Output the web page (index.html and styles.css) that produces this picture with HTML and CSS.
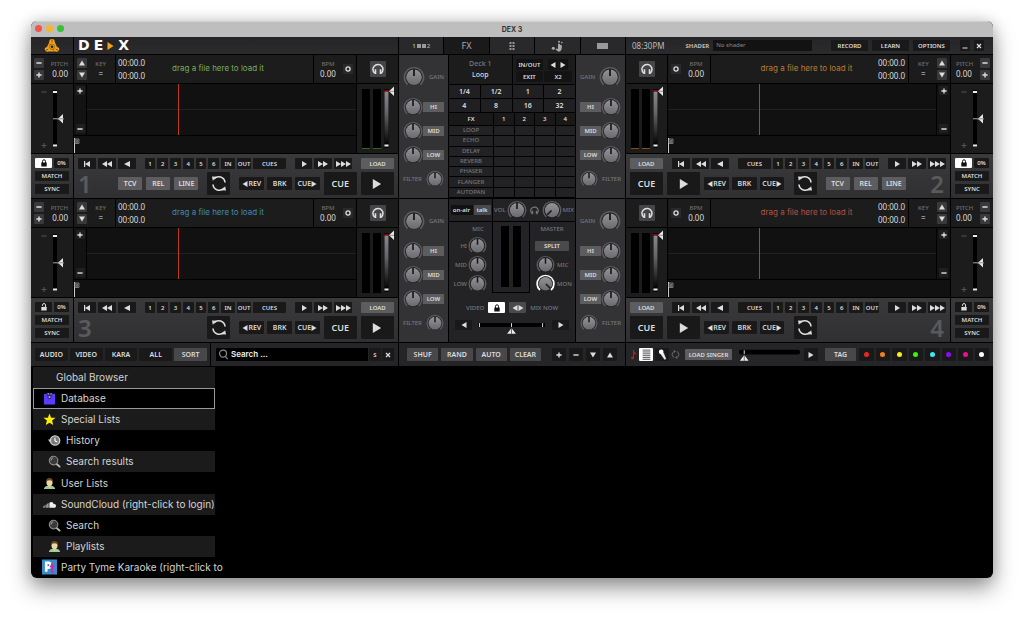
FILE: index.html
```html
<!DOCTYPE html>
<html lang="en">
<head>
<meta charset="utf-8">
<meta name="viewport" content="width=device-width, initial-scale=1">
<title>DEX 3</title>
<link rel="stylesheet" href="styles.css">
</head>
<body>
<svg class="defs" aria-hidden="true">
  <defs>
    <linearGradient id="gKnob" x1="0" y1="0" x2="0" y2="1"><stop offset="0" stop-color="#949498"/><stop offset="1" stop-color="#6a6a6e"/></linearGradient>
    <linearGradient id="gFade" x1="0" y1="0" x2="0" y2="1"><stop offset="0" stop-color="#88888c"/><stop offset=".4" stop-color="#66666a"/><stop offset="1" stop-color="#0a0a0a"/></linearGradient>
  </defs>
  <symbol id="knob" viewBox="0 0 22 22"><path d="M4.6 18.6A9.6 9.6 0 1 1 17.4 18.6" fill="none" stroke="#5c5c60" stroke-width="1.6"/><circle cx="11" cy="11" r="8.4" fill="#1c1c1e"/><circle cx="11" cy="11.2" r="7.8" fill="url(#gKnob)"/><path d="M11 3v7" stroke="#18181a" stroke-width="1.8"/></symbol>
  <symbol id="knob-min" viewBox="0 0 22 22"><path d="M4.6 18.6A9.6 9.6 0 1 1 17.4 18.6" fill="none" stroke="#5c5c60" stroke-width="1.6"/><circle cx="11" cy="11" r="8.4" fill="#1c1c1e"/><circle cx="11" cy="11.2" r="7.8" fill="url(#gKnob)"/><path d="M5.5 16.5l5-5" stroke="#18181a" stroke-width="1.8"/></symbol>
  <symbol id="knob-max" viewBox="0 0 22 22"><path d="M4.6 18.6A9.6 9.6 0 1 1 17.4 18.6" fill="none" stroke="#fff" stroke-width="2.2"/><circle cx="11" cy="11" r="8.4" fill="#1c1c1e"/><circle cx="11" cy="11.2" r="7.8" fill="url(#gKnob)"/><path d="M16.5 16.5l-5-5" stroke="#18181a" stroke-width="1.8"/></symbol>
  <symbol id="back" viewBox="0 0 18 6"><path d="M12 0v6L6 3z" fill="currentColor"/></symbol>
  <symbol id="prev" viewBox="0 0 18 6"><path d="M12 0v6L7 3zM6 0h1.2v6H6z" fill="currentColor"/></symbol>
  <symbol id="rew" viewBox="0 0 18 6"><path d="M9 0v6L4 3zM14 0v6L9 3z" fill="currentColor"/></symbol>
  <symbol id="play" viewBox="0 0 18 6"><path d="M7 0v6l5-3z" fill="currentColor"/></symbol>
  <symbol id="ff" viewBox="0 0 18 6"><path d="M4 0v6l5-3zM9 0v6l5-3z" fill="currentColor"/></symbol>
  <symbol id="fff" viewBox="0 0 18 6"><path d="M2 0v6l5-3zM7 0v6l5-3zM12 0v6l5-3z" fill="currentColor"/></symbol>
  <symbol id="left" viewBox="0 0 6 6"><path d="M5.5 0v6L.5 3z" fill="currentColor"/></symbol>
  <symbol id="right" viewBox="0 0 6 6"><path d="M.5 0v6l5-3z" fill="currentColor"/></symbol>
  <symbol id="up" viewBox="0 0 6 6"><path d="M0 5.5h6L3 .5z" fill="currentColor"/></symbol>
  <symbol id="down" viewBox="0 0 6 6"><path d="M0 .5h6L3 5.5z" fill="currentColor"/></symbol>
  <symbol id="plus" viewBox="0 0 6 6"><path d="M3 .4v5.2M.4 3h5.2" stroke="currentColor" stroke-width="1.4"/></symbol>
  <symbol id="minus" viewBox="0 0 6 6"><path d="M.4 3h5.2" stroke="currentColor" stroke-width="1.4"/></symbol>
  <symbol id="phones" viewBox="0 0 12 12"><path d="M3 10.5C.6 8 .6 5 2.200 3.200S7.800.6 9.800 3.200s1.600 4.800-.8 7.300" fill="none" stroke="currentColor" stroke-width="1.500"/><path d="M2.600 6.300h1.700v4.600H2.900zM9.400 6.300H7.700v4.600h1.400z" fill="currentColor"/></symbol>
  <symbol id="lock" viewBox="0 0 8 8"><path d="M1.300 3.600h5.400v3.900H1.300z" fill="currentColor"/><path d="M2.500 4V2.300a1.500 1.500 0 0 1 3 0V4" fill="none" stroke="currentColor"/></symbol>
  <symbol id="unlock" viewBox="0 0 8 8"><path d="M1.300 3.900h5.400v3.600H1.300z" fill="currentColor"/><path d="M2.500 2.800v-.8a1.500 1.500 0 0 1 3 0V4" fill="none" stroke="currentColor"/></symbol>
  <symbol id="sync" viewBox="0 0 16 16"><path d="M3 3.400a6.300 6.300 0 0 1 11 3.600M13 12.600a6.300 6.300 0 0 1-11-3.600" fill="none" stroke="currentColor" stroke-width="1.600"/><path d="M1 1l4.600.3-3.800 4zM15 15l-4.600-.3 3.800-4z" fill="currentColor"/></symbol>
  <symbol id="cycle" viewBox="0 0 10 10"><path d="M3.500 1.600a3.700 3.700 0 0 0 0 6.800M6.500 8.400a3.700 3.700 0 0 0 0-6.800" fill="none" stroke="currentColor" stroke-width="1.100"/><path d="M3 0l2.500 1.400L3.500 3.200zM7 10L4.500 8.600l2-1.800z" fill="currentColor"/></symbol>
  <symbol id="ring" viewBox="0 0 6 6"><circle cx="3" cy="3" r="2.100" fill="none" stroke="currentColor" stroke-width="1.300"/></symbol>
  <symbol id="pitchfader" viewBox="0 0 42 69"><path d="M22 6h4v57h-4z" fill="#000"/><path d="M22 7h4v2h-4zM22 60.500h4v2h-4z" fill="#eee"/><path d="M22 34.300h4v1h-4z" fill="#aaa"/><path d="M32 30v9.500l-5-4.700zM26.500 34.200h6v1.200h-6z" fill="#e8e8e8"/><path d="M27.500 34.800h4.500" stroke="#555" stroke-width=".6"/><path d="M10.500 8h5M10.500 61.500h5M13 59v5" stroke="#555"/></symbol>
  <symbol id="levels" viewBox="0 0 41 69"><path d="M5 5h8v60H5zM16 5h8v60h-8zM27.500 5h4v59h-4z" fill="#000"/><path d="M5 64h8v1H5zM16 64h8v1h-8z" fill="currentColor"/><path d="M27.500 8h4v51h-4z" fill="url(#gFade)"/><path d="M27.500 6.500h4v1.200h-4z" fill="#e22"/><path d="M27.500 60.500h4v2h-4z" fill="#eee"/><path d="M37 2.500v9.500l-5-4.700z" fill="#e8e8e8"/><path d="M33 7.300h4" stroke="#555" stroke-width=".6"/></symbol>
  <symbol id="flag" viewBox="0 0 6 15"><path d="M.5 0v15" stroke="#ccc"/><path d="M1 1h4v4.500H1z" fill="#333" stroke="#888" stroke-width=".8"/><path d="M3 2v3" stroke="#bbb" stroke-width=".8"/></symbol>
  <symbol id="lens" viewBox="0 0 14 14"><path d="M9 9.500l3.500 3" stroke="#bbb" stroke-width="2" stroke-linecap="round"/><circle cx="6" cy="6" r="4.600" fill="#3a3a3a" stroke="#8c8c8c" stroke-width="1.200"/><path d="M3.200 6a3 3 0 0 1 2.500-3" fill="none" stroke="#aaa"/></symbol>
  <symbol id="user" viewBox="0 0 14 14"><path d="M1 13C1.500 10 4 9.500 7 9.500s5.500.5 6 3.500z" fill="#96d296"/><path d="M5.500 8.500h3v2L7 11.500l-1.500-1z" fill="#e6c89a"/><ellipse cx="7" cy="6" rx="3.300" ry="3.800" fill="#f0d6a4"/><path d="M3.400 6C3 2.500 4.800 1.200 7 1.200S11 2.500 10.600 6C10 4.300 9 3.600 7 3.600S4 4.300 3.400 6z" fill="#6b4a1e"/></symbol>
</svg>

<main class="window">
  <h1 class="titlebar"><span class="lights"><i class="close"></i><i class="min"></i><i class="max"></i></span>DEX 3</h1>

  <header class="header">
    <div class="brand">
      <svg class="emblem" viewBox="0 0 16 16" role="img" aria-label="PCDJ"><path d="M8 1c1.900 0 2.900 1.200 2.700 3L13 9c2 .3 2.600 1.600 2.100 3.100s-2.100 2-3.500 1.300H4.400C3 14.100 1.400 13.600.9 12.100S1 9.300 3 9l2.300-5C5.100 2.200 6.100 1 8 1z" fill="#f2a31a"/><path d="M8 1.500v2.700M1.500 12.500l2.700-1.300M14.500 12.500l-2.800-1.400M5.500 6l1 .9M9.500 12.500l-.6-1.300" stroke="#5a3e0a" stroke-width=".8" fill="none"/><circle cx="8" cy="8.700" r="1.300" fill="#222"/><circle cx="8" cy="8.700" r="2.700" fill="none" stroke="#5a3e0a" stroke-width=".5"/></svg>
    </div>
    <div class="logo"><span>D</span><span>E</span><svg viewBox="0 0 6 8"><path d="M0 0v8l6-4z" fill="#f2a31a"/></svg><span>X</span></div>
    <nav class="tabs" aria-label="Panels">
      <button class="tiny">1<i></i><i></i>2</button>
      <button class="active">FX</button>
      <button aria-label="Sampler"><svg viewBox="0 0 8 8"><path d="M1.500 0h2v2h-2zM4.500 0h2v2h-2zM1.500 3h2v2h-2zM4.500 3h2v2h-2zM1.500 6h2v2h-2zM4.500 6h2v2h-2z" fill="#999"/></svg></button>
      <button aria-label="Effects pad"><svg class="wide" viewBox="0 0 12 12"><path d="M7 4l1.200-.5L9.500 5l1.500.5-.5 4L9 11.500H7L4.500 9.300l.6-.8L7 9z" fill="#aaa"/><circle cx="8" cy="1.800" r="1" fill="#aaa"/><circle cx="10.800" cy="2.600" r=".8" fill="#aaa"/><circle cx="2.300" cy="8.300" r="1.500" fill="#aaa"/></svg></button>
      <button aria-label="Video"><span class="screen"></span></button>
    </nav>
    <div class="status">
      <time>08:30PM</time>
      <label for="shader">SHADER</label><input id="shader" value="No shader">
      <button>RECORD</button><button>LEARN</button><button>OPTIONS</button>
      <button class="sq" aria-label="Minimize"><svg viewBox="0 0 6 6"><path d="M.5 5h5" stroke="#ddd" stroke-width="1.200"/></svg></button>
      <button class="sq" aria-label="Close"><svg viewBox="0 0 6 6"><path d="M1 1l4 4M5 1L1 5" stroke="#ddd" stroke-width="1.300"/></svg></button>
    </div>
  </header>

  <div class="mixer">
    <section class="deck a" aria-label="Deck 1">
      <div class="pitch-head"><div class="steps"><button aria-label="Pitch down"><svg><use href="#minus"/></svg></button><button aria-label="Pitch up"><svg><use href="#plus"/></svg></button></div><p class="readout">PITCH<b>0.00</b></p></div>
      <div class="info green"><div class="key"><div class="steps"><button aria-label="Key up"><svg><use href="#up"/></svg></button><button aria-label="Key down"><svg><use href="#down"/></svg></button></div><p class="readout">KEY<b>=</b></p></div><p class="times">00:00.0<br>00:00.0</p><p class="drop">drag a file here to load it</p><div class="bpm"><p class="readout">BPM<b>0.00</b></p><button class="tap" aria-label="Tap"><svg><use href="#ring"/></svg></button></div></div>
      <div class="phones"><button aria-label="Cue in headphones"><svg><use href="#phones"/></svg></button></div>
      <label class="fader"><input type="range" aria-label="Pitch"><svg><use href="#pitchfader"/></svg></label>
      <div class="scope"><div class="zoomer"><button aria-label="Zoom in"><svg><use href="#plus"/></svg></button><button aria-label="Zoom out"><svg><use href="#minus"/></svg></button></div><div class="wave"></div><div class="overview"><svg><use href="#flag"/></svg></div></div>
      <label class="fader"><input type="range" aria-label="Volume"><svg><use href="#levels"/></svg></label>
      <div class="sync"><button class="on" aria-label="Lock key"><svg><use href="#lock"/></svg></button><button>0%</button><button class="full">MATCH</button><button class="full">SYNC</button></div>
      <div class="controls">
        <div class="row">
          <div class="trio"><button aria-label="Start"><svg><use href="#prev"/></svg></button><button aria-label="Rewind"><svg><use href="#rew"/></svg></button><button aria-label="Back"><svg><use href="#back"/></svg></button></div>
          <div class="hot"><button>1</button><button>2</button><button>3</button><button>4</button><button>5</button><button>6</button><button>IN</button><button>OUT</button><button>CUES</button></div>
          <div class="trio"><button aria-label="Forward"><svg><use href="#play"/></svg></button><button aria-label="Fast forward"><svg><use href="#ff"/></svg></button><button aria-label="Faster forward"><svg><use href="#fff"/></svg></button></div>
          <button class="load">LOAD</button>
        </div>
        <div class="row big">
          <span class="num">1</span>
          <div class="modes"><button>TCV</button><button>REL</button><button>LINE</button></div>
          <button class="loop" aria-label="Loop"><svg><use href="#sync"/></svg></button>
          <div class="edits"><button><svg><use href="#left"/></svg>REV</button><button>BRK</button><button>CUE<svg><use href="#right"/></svg></button></div>
          <button class="main">CUE</button><button class="main" aria-label="Play"><svg><use href="#right"/></svg></button>
        </div>
      </div>
    </section>

    <section class="eq" aria-label="Deck 1 EQ">
      <div class="gain"><label class="knob"><input type="range" aria-label="Gain"><svg><use href="#knob"/></svg></label><span>GAIN</span></div>
      <div><label class="knob"><input type="range" aria-label="High"><svg><use href="#knob"/></svg></label><button>HI</button></div>
      <div><label class="knob"><input type="range" aria-label="Mid"><svg><use href="#knob"/></svg></label><button>MID</button></div>
      <div><label class="knob"><input type="range" aria-label="Low"><svg><use href="#knob"/></svg></label><button>LOW</button></div>
      <div class="filter"><span>FILTER</span><label class="knob"><input type="range" aria-label="Filter"><svg><use href="#knob"/></svg></label></div>
    </section>

    <section class="fx" aria-label="Effects">
      <div class="fx-top">
        <p>Deck 1<b>Loop</b></p>
        <div class="looper"><button>IN/OUT</button><span><button aria-label="Loop left"><svg><use href="#left"/></svg></button><button aria-label="Loop right"><svg><use href="#right"/></svg></button></span><button>EXIT</button><button>X2</button></div>
      </div>
      <div class="beats"><button>1/4</button><button>1/2</button><button>1</button><button>2</button><button>4</button><button>8</button><button>16</button><button>32</button></div>
      <table>
        <thead><tr><th>FX</th><th>1</th><th>2</th><th>3</th><th>4</th></tr></thead>
        <tbody>
          <tr><td>LOOP</td><td></td><td></td><td></td><td></td></tr>
          <tr><td>ECHO</td><td></td><td></td><td></td><td></td></tr>
          <tr><td>DELAY</td><td></td><td></td><td></td><td></td></tr>
          <tr><td>REVERB</td><td></td><td></td><td></td><td></td></tr>
          <tr><td>PHASER</td><td></td><td></td><td></td><td></td></tr>
          <tr><td>FLANGER</td><td></td><td></td><td></td><td></td></tr>
          <tr><td>AUTOPAN</td><td></td><td></td><td></td><td></td></tr>
        </tbody>
      </table>
    </section>

    <section class="eq flip" aria-label="Deck 2 EQ">
      <div class="gain"><span>GAIN</span><label class="knob"><input type="range" aria-label="Gain"><svg><use href="#knob"/></svg></label></div>
      <div><button>HI</button><label class="knob"><input type="range" aria-label="High"><svg><use href="#knob"/></svg></label></div>
      <div><button>MID</button><label class="knob"><input type="range" aria-label="Mid"><svg><use href="#knob"/></svg></label></div>
      <div><button>LOW</button><label class="knob"><input type="range" aria-label="Low"><svg><use href="#knob"/></svg></label></div>
      <div class="filter"><label class="knob"><input type="range" aria-label="Filter"><svg><use href="#knob"/></svg></label><span>FILTER</span></div>
    </section>

    <section class="deck b" aria-label="Deck 2">
      <div class="phones"><button aria-label="Cue in headphones"><svg><use href="#phones"/></svg></button></div>
      <div class="info orange"><div class="bpm"><button class="tap" aria-label="Tap"><svg><use href="#ring"/></svg></button><p class="readout">BPM<b>0.00</b></p></div><p class="drop">drag a file here to load it</p><p class="times">00:00.0<br>00:00.0</p><div class="key"><p class="readout">KEY<b>=</b></p><div class="steps"><button aria-label="Key up"><svg><use href="#up"/></svg></button><button aria-label="Key down"><svg><use href="#down"/></svg></button></div></div></div>
      <div class="pitch-head"><p class="readout">PITCH<b>0.00</b></p><div class="steps"><button aria-label="Pitch down"><svg><use href="#minus"/></svg></button><button aria-label="Pitch up"><svg><use href="#plus"/></svg></button></div></div>
      <label class="fader amber"><input type="range" aria-label="Volume"><svg><use href="#levels"/></svg></label>
      <div class="scope"><div class="wave"></div><div class="zoomer"><button aria-label="Zoom in"><svg><use href="#plus"/></svg></button><button aria-label="Zoom out"><svg><use href="#minus"/></svg></button></div><div class="overview"><svg><use href="#flag"/></svg></div></div>
      <label class="fader"><input type="range" aria-label="Pitch"><svg><use href="#pitchfader"/></svg></label>
      <div class="controls">
        <div class="row">
          <button class="load">LOAD</button>
          <div class="trio"><button aria-label="Start"><svg><use href="#prev"/></svg></button><button aria-label="Rewind"><svg><use href="#rew"/></svg></button><button aria-label="Back"><svg><use href="#back"/></svg></button></div>
          <div class="hot"><button>CUES</button><button>1</button><button>2</button><button>3</button><button>4</button><button>5</button><button>6</button><button>IN</button><button>OUT</button></div>
          <div class="trio"><button aria-label="Forward"><svg><use href="#play"/></svg></button><button aria-label="Fast forward"><svg><use href="#ff"/></svg></button><button aria-label="Faster forward"><svg><use href="#fff"/></svg></button></div>
        </div>
        <div class="row big">
          <button class="main">CUE</button><button class="main" aria-label="Play"><svg><use href="#right"/></svg></button>
          <div class="edits"><button><svg><use href="#left"/></svg>REV</button><button>BRK</button><button>CUE<svg><use href="#right"/></svg></button></div>
          <button class="loop" aria-label="Loop"><svg><use href="#sync"/></svg></button>
          <div class="modes"><button>TCV</button><button>REL</button><button>LINE</button></div>
          <span class="num">2</span>
        </div>
      </div>
      <div class="sync"><button class="on" aria-label="Lock key"><svg><use href="#lock"/></svg></button><button>0%</button><button class="full">MATCH</button><button class="full">SYNC</button></div>
    </section>

    <section class="deck a" aria-label="Deck 3">
      <div class="pitch-head"><div class="steps"><button aria-label="Pitch down"><svg><use href="#minus"/></svg></button><button aria-label="Pitch up"><svg><use href="#plus"/></svg></button></div><p class="readout">PITCH<b>0.00</b></p></div>
      <div class="info blue"><div class="key"><div class="steps"><button aria-label="Key up"><svg><use href="#up"/></svg></button><button aria-label="Key down"><svg><use href="#down"/></svg></button></div><p class="readout">KEY<b>=</b></p></div><p class="times">00:00.0<br>00:00.0</p><p class="drop">drag a file here to load it</p><div class="bpm"><p class="readout">BPM<b>0.00</b></p><button class="tap" aria-label="Tap"><svg><use href="#ring"/></svg></button></div></div>
      <div class="phones"><button aria-label="Cue in headphones"><svg><use href="#phones"/></svg></button></div>
      <label class="fader"><input type="range" aria-label="Pitch"><svg><use href="#pitchfader"/></svg></label>
      <div class="scope"><div class="zoomer"><button aria-label="Zoom in"><svg><use href="#plus"/></svg></button><button aria-label="Zoom out"><svg><use href="#minus"/></svg></button></div><div class="wave"></div><div class="overview"><svg><use href="#flag"/></svg></div></div>
      <label class="fader idle"><input type="range" aria-label="Volume"><svg><use href="#levels"/></svg></label>
      <div class="sync"><button aria-label="Lock key"><svg><use href="#unlock"/></svg></button><button>0%</button><button class="full">MATCH</button><button class="full">SYNC</button></div>
      <div class="controls">
        <div class="row">
          <div class="trio"><button aria-label="Start"><svg><use href="#prev"/></svg></button><button aria-label="Rewind"><svg><use href="#rew"/></svg></button><button aria-label="Back"><svg><use href="#back"/></svg></button></div>
          <div class="hot"><button>1</button><button>2</button><button>3</button><button>4</button><button>5</button><button>6</button><button>IN</button><button>OUT</button><button>CUES</button></div>
          <div class="trio"><button aria-label="Forward"><svg><use href="#play"/></svg></button><button aria-label="Fast forward"><svg><use href="#ff"/></svg></button><button aria-label="Faster forward"><svg><use href="#fff"/></svg></button></div>
          <button class="load">LOAD</button>
        </div>
        <div class="row big">
          <span class="num">3</span>
          <div class="modes"></div>
          <button class="loop" aria-label="Loop"><svg><use href="#sync"/></svg></button>
          <div class="edits"><button><svg><use href="#left"/></svg>REV</button><button>BRK</button><button>CUE<svg><use href="#right"/></svg></button></div>
          <button class="main">CUE</button><button class="main" aria-label="Play"><svg><use href="#right"/></svg></button>
        </div>
      </div>
    </section>

    <section class="eq" aria-label="Deck 3 EQ">
      <div class="gain"><label class="knob"><input type="range" aria-label="Gain"><svg><use href="#knob"/></svg></label><span>GAIN</span></div>
      <div><label class="knob"><input type="range" aria-label="High"><svg><use href="#knob"/></svg></label><button>HI</button></div>
      <div><label class="knob"><input type="range" aria-label="Mid"><svg><use href="#knob"/></svg></label><button>MID</button></div>
      <div><label class="knob"><input type="range" aria-label="Low"><svg><use href="#knob"/></svg></label><button>LOW</button></div>
      <div class="filter"><span>FILTER</span><label class="knob"><input type="range" aria-label="Filter"><svg><use href="#knob"/></svg></label></div>
    </section>

    <section class="master" aria-label="Master">
      <div class="air"><button class="black">on-air</button><button>talk</button></div>
      <div class="hp"><span>VOL</span><label class="knob"><input type="range" aria-label="Headphone volume"><svg><use href="#knob"/></svg></label><svg class="cans"><use href="#phones"/></svg><label class="knob"><input type="range" aria-label="Headphone mix"><svg><use href="#knob-min"/></svg></label><span>MIX</span></div>
      <div class="buses">
        <div class="mic"><h2>MIC</h2>
          <span>HI</span><label class="knob"><input type="range" aria-label="Mic high"><svg><use href="#knob"/></svg></label>
          <span>MID</span><label class="knob"><input type="range" aria-label="Mic mid"><svg><use href="#knob"/></svg></label>
          <span>LOW</span><label class="knob"><input type="range" aria-label="Mic low"><svg><use href="#knob"/></svg></label>
        </div>
        <div class="meters"><i></i><i></i></div>
        <div class="out"><h2>MASTER</h2><button>SPLIT</button>
          <label class="knob"><input type="range" aria-label="Mic level"><svg><use href="#knob"/></svg></label><span>MIC</span>
          <label class="knob"><input type="range" aria-label="Monitor level"><svg><use href="#knob-max"/></svg></label><span>MON</span>
        </div>
      </div>
      <div class="video"><span>VIDEO</span><button class="on" aria-label="Link video"><svg><use href="#lock"/></svg></button><button aria-label="Mix now"><svg><use href="#left"/></svg><svg><use href="#right"/></svg></button><span>MIX NOW</span></div>
      <div class="cross"><button aria-label="Fade left"><svg><use href="#left"/></svg></button><label class="fader"><input type="range" aria-label="Crossfader"><svg viewBox="0 0 70 14"><path d="M0 3h69v4H0z" fill="#000"/><path d="M1.500 3v4M66.500 3v4M34.500 3v4" stroke="#ddd"/><path d="M34.500 8l4.500 6h-9z" fill="#eee"/><path d="M34.500 8v6" stroke="#444" stroke-width=".8"/></svg></label><button aria-label="Fade right"><svg><use href="#right"/></svg></button></div>
    </section>

    <section class="eq flip" aria-label="Deck 4 EQ">
      <div class="gain"><span>GAIN</span><label class="knob"><input type="range" aria-label="Gain"><svg><use href="#knob"/></svg></label></div>
      <div><button>HI</button><label class="knob"><input type="range" aria-label="High"><svg><use href="#knob"/></svg></label></div>
      <div><button>MID</button><label class="knob"><input type="range" aria-label="Mid"><svg><use href="#knob"/></svg></label></div>
      <div><button>LOW</button><label class="knob"><input type="range" aria-label="Low"><svg><use href="#knob"/></svg></label></div>
      <div class="filter"><label class="knob"><input type="range" aria-label="Filter"><svg><use href="#knob"/></svg></label><span>FILTER</span></div>
    </section>

    <section class="deck b" aria-label="Deck 4">
      <div class="phones"><button aria-label="Cue in headphones"><svg><use href="#phones"/></svg></button></div>
      <div class="info red"><div class="bpm"><button class="tap" aria-label="Tap"><svg><use href="#ring"/></svg></button><p class="readout">BPM<b>0.00</b></p></div><p class="drop">drag a file here to load it</p><p class="times">00:00.0<br>00:00.0</p><div class="key"><p class="readout">KEY<b>=</b></p><div class="steps"><button aria-label="Key up"><svg><use href="#up"/></svg></button><button aria-label="Key down"><svg><use href="#down"/></svg></button></div></div></div>
      <div class="pitch-head"><p class="readout">PITCH<b>0.00</b></p><div class="steps"><button aria-label="Pitch down"><svg><use href="#minus"/></svg></button><button aria-label="Pitch up"><svg><use href="#plus"/></svg></button></div></div>
      <label class="fader idle"><input type="range" aria-label="Volume"><svg><use href="#levels"/></svg></label>
      <div class="scope"><div class="wave"></div><div class="zoomer"><button aria-label="Zoom in"><svg><use href="#plus"/></svg></button><button aria-label="Zoom out"><svg><use href="#minus"/></svg></button></div><div class="overview"><svg><use href="#flag"/></svg></div></div>
      <label class="fader"><input type="range" aria-label="Pitch"><svg><use href="#pitchfader"/></svg></label>
      <div class="controls">
        <div class="row">
          <button class="load">LOAD</button>
          <div class="trio"><button aria-label="Start"><svg><use href="#prev"/></svg></button><button aria-label="Rewind"><svg><use href="#rew"/></svg></button><button aria-label="Back"><svg><use href="#back"/></svg></button></div>
          <div class="hot"><button>CUES</button><button>1</button><button>2</button><button>3</button><button>4</button><button>5</button><button>6</button><button>IN</button><button>OUT</button></div>
          <div class="trio"><button aria-label="Forward"><svg><use href="#play"/></svg></button><button aria-label="Fast forward"><svg><use href="#ff"/></svg></button><button aria-label="Faster forward"><svg><use href="#fff"/></svg></button></div>
        </div>
        <div class="row big">
          <button class="main">CUE</button><button class="main" aria-label="Play"><svg><use href="#right"/></svg></button>
          <div class="edits"><button><svg><use href="#left"/></svg>REV</button><button>BRK</button><button>CUE<svg><use href="#right"/></svg></button></div>
          <button class="loop" aria-label="Loop"><svg><use href="#sync"/></svg></button>
          <div class="modes"></div>
          <span class="num">4</span>
        </div>
      </div>
      <div class="sync"><button aria-label="Lock key"><svg><use href="#unlock"/></svg></button><button>0%</button><button class="full">MATCH</button><button class="full">SYNC</button></div>
    </section>
  </div>

  <div class="toolbar">
    <div class="left">
      <div class="kinds"><button>AUDIO</button><button>VIDEO</button><button>KARA</button><button>ALL</button><button class="lit">SORT</button></div>
      <div class="search"><label for="q"><svg viewBox="0 0 12 12" role="img" aria-label="Search"><circle cx="5.500" cy="5" r="3.800" fill="none" stroke="#8a8a8a" stroke-width="1.300"/><path d="M8 8l2.500 3" stroke="#8a8a8a" stroke-width="1.300"/></svg></label><input id="q" value="Search ..."><button>S</button><button aria-label="Clear search"><svg viewBox="0 0 6 6"><path d="M1 1l4 4M5 1L1 5" stroke="#ddd" stroke-width="1.300"/></svg></button></div>
    </div>
    <div class="queue"><button class="lit">SHUF</button><button class="lit">RAND</button><button class="lit">AUTO</button><button class="lit">CLEAR</button><div><button aria-label="Add"><svg><use href="#plus"/></svg></button><button aria-label="Remove"><svg><use href="#minus"/></svg></button><button aria-label="Move down"><svg><use href="#down"/></svg></button><button aria-label="Move up"><svg><use href="#up"/></svg></button></div></div>
    <div class="singer">
      <svg class="note" viewBox="0 0 6 10"><path d="M2.500 0v7.500" stroke="#d01818" stroke-width="1"/><path d="M2.500 0c.3 2.500 3.300 2.500 2.800 5.500-.5-1.500-1.500-2-2.800-2.300z" fill="#d01818"/><ellipse cx="1.500" cy="8" rx="1.500" ry="1.200" fill="#d01818"/></svg>
      <button class="on" aria-label="Singer list"><svg viewBox="0 0 10 10"><path d="M1.500 1h7M1.500 2.700h7M1.500 4.400h7M1.500 6.100h7M1.500 7.800h7M1.500 9.400h7" stroke="#444" stroke-width=".8"/></svg></button>
      <button class="mike" aria-label="Microphone"><svg viewBox="0 0 10 10"><path d="M3.500 4.500l3.500 5 1-.6L5.800 3.500z" fill="#eee" stroke="#eee" stroke-width=".5"/><circle cx="3.800" cy="2.600" r="2.100" fill="#fff"/></svg></button>
      <svg class="cycle"><use href="#cycle"/></svg>
      <button class="who">LOAD SINGER</button>
      <label class="fader"><input type="range" aria-label="Singer volume"><svg viewBox="0 0 64 14"><rect y="1.500" width="64" height="5" rx="2" fill="#000"/><path d="M5.500 2v4" stroke="#ddd"/><path d="M5.500 7l4.500 6H1z" fill="#eee"/><path d="M5.500 7v6" stroke="#444" stroke-width=".8"/></svg></label>
      <button class="go" aria-label="Play singer"><svg><use href="#right"/></svg></button>
      <button class="lit">TAG</button>
      <div class="tags"><button class="t1" aria-label="Red tag"></button><button class="t2" aria-label="Orange tag"></button><button class="t3" aria-label="Yellow tag"></button><button class="t4" aria-label="Green tag"></button><button class="t5" aria-label="Cyan tag"></button><button class="t6" aria-label="Purple tag"></button><button class="t7" aria-label="Pink tag"></button><button class="t8" aria-label="White tag"></button></div>
    </div>
  </div>

  <ul class="browser">
    <li class="head">Global Browser</li>
    <li class="sel"><svg viewBox="0 0 14 14"><path d="M1 2h12v11.500H1z" fill="#5b3cff"/><path d="M4 1h6v3H4z" fill="#2a1f70"/><path d="M5 1.300h1.300v1.500H5zM8 1.300h1.300v1.500H8z" fill="#c8c8f0"/><circle cx="7" cy="5.500" r="1.700" fill="#b0a8e0" stroke="#2a1f70" stroke-width="1.100"/></svg>Database</li>
    <li><svg viewBox="0 0 14 14"><path d="M7 .5l1.700 4.500 4.800.2-3.700 3 1.200 4.800L7 10.400 3 13l1.200-4.800-3.700-3 4.800-.2z" fill="#ffee00"/></svg>Special Lists</li>
    <li class="sub"><svg viewBox="0 0 14 14"><circle cx="7.600" cy="7" r="5" fill="#777" stroke="#ccc" stroke-width="1.500"/><path d="M7.500 4v3.300l2.500 1.200" fill="none" stroke="#fff" stroke-width="1.200"/><path d="M0 6h4L2 9z" fill="#ccc"/></svg>History</li>
    <li class="sub"><svg><use href="#lens"/></svg>Search results</li>
    <li><svg><use href="#user"/></svg>User Lists</li>
    <li><svg viewBox="0 0 14 14"><path d="M7 10.500V5c2-1.500 4.200-.4 4.500 1.600 1.700-.4 2.500.7 2.500 1.900s-.8 2-2 2z" fill="#eee"/><path d="M6.500 10.500V5.500M5 10.500V6M3.500 10.500V7M2 10.500V8M.5 10.300V9" stroke="#bbb"/></svg>SoundCloud (right-click to login)</li>
    <li class="sub"><svg><use href="#lens"/></svg>Search</li>
    <li class="sub"><svg><use href="#user"/></svg>Playlists</li>
    <li class="party"><svg viewBox="0 0 16 16"><path d="M0 0h16v16H0z" fill="#3a8cc8"/><path d="M4.500 13V3.500h2.200a2.400 2.400 0 0 1 0 5.200H4.500" fill="none" stroke="#fff" stroke-width="2.800"/><path d="M10.500 4v8.500q0 1.500 2 1.300M8.500 7.500h4.500" fill="none" stroke="#e020b0" stroke-width="2"/></svg>Party Tyme Karaoke (right-click to</li>
  </ul>
</main>
</body>
</html>
```

FILE: styles.css
```css
* { box-sizing: border-box; }
body {
  margin: 0;
  min-height: 100vh;
  padding: 21px 31px 41px;
  display: flex;
  background: #fff;
  color: #ddd;
  font: 500 6px/8px "Noto Sans", "Open Sans", sans-serif;
}
p, h1, h2, ul { margin: 0; padding: 0; font-weight: 500; }
.defs { position: absolute; width: 0; height: 0; }
svg { display: block; width: 6px; height: 6px; flex: none; }
button {
  display: flex;
  align-items: center;
  justify-content: center;
  min-width: 0;
  padding: 0;
  border: 0;
  border-radius: 1px;
  background: #19191a;
  color: #ddd;
  font: 600 6px/8px "Noto Sans", "Open Sans", sans-serif;
  white-space: nowrap;
}
button.on { background: #fff; color: #111; }

.window {
  flex: 1;
  min-width: 0;
  display: flex;
  flex-direction: column;
  overflow: hidden;
  border-radius: 6px;
  background: #000;
  box-shadow: 0 10px 22px rgba(0, 0, 0, .42), 0 0 14px rgba(0, 0, 0, .14);
}
.titlebar {
  position: relative;
  height: 16px;
  border-top: 1px solid #d0d0d0;
  background: #bebebe;
  color: #333;
  font: 700 7px/15px Inter, sans-serif;
  text-align: center;
}
.lights { position: absolute; left: 4px; top: 3px; display: flex; gap: 4px; }
.lights i { width: 7px; height: 7px; border-radius: 50%; background: #f4524d; }
.lights .min { background: #f5b52e; }
.lights .max { background: #35c138; }

/* Header */
.header {
  display: grid;
  grid-template-columns: 42px minmax(0, calc(50% - 157px)) 226px minmax(0, 1fr);
  column-gap: 1px;
  height: 18px;
  padding-bottom: 1px;
  background: #000;
}
.header > * { background: linear-gradient(#252527, #2b2b2d); }
.brand { display: grid; place-items: center; }
.emblem { width: 16px; height: 16px; }
.logo {
  display: flex;
  align-items: center;
  gap: 4px;
  padding-left: 4px;
  color: #fff;
  font: 700 14px/17px "DejaVu Sans", sans-serif;
}
.logo svg { width: 7px; height: 8px; }
.tabs { display: grid; grid-template-columns: repeat(5, 1fr); gap: 1px; }
.header .tabs { background: #000; }
.tabs button { gap: 1px; border-radius: 0; background: #29292b; color: #aaa; font-weight: 400; font-size: 9px; }
.tabs .active { background: #1a1a1b; }
.tabs .tiny { font-size: 6px; font-weight: 600; }
.tabs i { width: 4px; height: 4px; background: #999; }
.tabs svg { width: 8px; height: 8px; }
.tabs .wide { width: 12px; height: 12px; }
.screen { width: 11px; height: 6px; background: #999; }
.status { display: flex; align-items: center; gap: 4px; padding: 0 9px 0 6px; color: #bbb; }
.status time { margin-right: 17px; font-size: 8px; font-weight: 400; }
.status label { font-weight: 700; }
.status input {
  flex: 1;
  min-width: 0;
  height: 11px;
  margin-right: 15px;
  padding: 0 3px;
  border: 0;
  background: #121213;
  color: #8a8a8a;
  font: 6px/11px "Noto Sans", sans-serif;
}
.status button { width: 37px; height: 11px; }
.status .sq { width: 10px; }
.status .sq:nth-last-child(2) { margin-left: 6px; }

/* Decks */
.mixer {
  display: grid;
  grid-template-columns: minmax(0, 1fr) 49px 126px 49px minmax(0, 1fr);
  grid-auto-rows: 143px;
  gap: 1px;
  padding-bottom: 1px;
}
.deck { display: grid; grid-template: 28px 69px 1fr / 42px minmax(0, 1fr) 41px; gap: 1px; }
.deck.b { grid-template-columns: 41px minmax(0, 1fr) 42px; }
.deck > * { background: #1c1c1d; }
.steps { display: flex; flex-direction: column; justify-content: space-between; }
.steps button, .tap { width: 10px; height: 10px; background: #39393b; }
.tap { background: #2a2a2c; }
.readout { padding-top: 2px; color: #6c6c6e; line-height: 8px; }
.readout b { display: block; color: #ddd; font-size: 8px; line-height: 12px; font-weight: 400; }
.pitch-head { display: flex; justify-content: space-between; padding: 3px 5px 3px 3px; text-align: right; }
.b .pitch-head { padding: 3px 3px 3px 5px; text-align: left; }
.info { display: flex; }
.key { display: flex; justify-content: space-between; width: 42px; padding: 3px 9px 3px 3px; border-right: 1px solid #000; text-align: center; }
.b .key { padding: 3px 3px 3px 9px; border-left: 1px solid #000; border-right: 0; }
.times { width: 32px; padding: 1px 2px; font-size: 8px; line-height: 13px; font-weight: 400; }
.drop { flex: 1; padding-right: 25px; font: 8px/27px Inter, "Liberation Sans", sans-serif; text-align: center; white-space: nowrap; }
.b .drop { padding: 0 0 0 26px; }
.green .drop { color: #77ad58; }
.orange .drop { color: #bd7b30; }
.blue .drop { color: #4089b3; }
.red .drop { color: #b35044; }
.bpm { display: flex; align-items: center; justify-content: space-between; width: 43px; padding: 0 3px 0 6px; border-left: 1px solid #000; text-align: center; }
.bpm .readout { padding-top: 1px; }
.b .bpm { padding: 0 6px 0 3px; border-left: 0; border-right: 1px solid #000; }
.phones { display: grid; place-items: center; }
.phones button { width: 16px; height: 16px; background: #454547; }
.phones svg { width: 12px; height: 12px; }

.fader { position: relative; display: block; color: #2e6b10; }
.fader.amber { color: #8a4a10; }
.fader.idle { color: #000; }
.fader svg { width: 100%; height: 100%; }
.fader input, .knob input { position: absolute; inset: 0; width: 100%; height: 100%; margin: 0; opacity: 0; }
.scope { display: grid; grid-template: 51px 1fr / 12px minmax(0, 1fr); gap: 1px; }
.b .scope { grid-template-columns: minmax(0, 1fr) 13px; }
.deck .scope { background: #000; }
.zoomer { display: flex; flex-direction: column; align-items: center; justify-content: space-between; padding: 2px 0; background: #131314; }
.zoomer button { width: 9px; height: 9px; background: #1f1f20; }
.wave { display: grid; grid-template: 1fr 1fr / 100%; background: #111112; }
.wave::before { content: ""; grid-area: 1 / 1 / 2 / 2; border-bottom: 1px solid #202228; }
.wave::after { content: ""; grid-area: 1 / 1 / 3 / 2; width: 34%; border-right: 1px solid #c23a1e; }
.overview { grid-column: 1 / -1; padding-top: 2px; background: #111112; }
.overview svg { width: 6px; height: 15px; }

.deck .sync, .deck .controls { background: linear-gradient(#3a3a3c, #303033); }
.sync { display: grid; grid-template-columns: 17fr 15fr; gap: 2px; padding: 4px; align-content: space-between; }
.sync button { height: 10px; }
.sync svg { width: 8px; height: 8px; }
.sync .full { grid-column: 1 / -1; }
.controls { grid-column: span 2; display: flex; flex-direction: column; justify-content: space-between; padding: 4px 4px 3px; }
.row { display: grid; grid-template-columns: 58fr 142fr 58fr 33fr; gap: 9px; }
.b .row { grid-template-columns: 33fr 58fr 142fr 58fr; }
.row button { height: 11px; }
.trio { display: grid; grid-template-columns: repeat(3, 1fr); gap: 2px; }
.trio svg { width: 18px; height: 6px; }
.hot { display: grid; grid-template-columns: repeat(6, 11fr) 14fr 15fr 33fr; gap: 2px; }
.b .hot { grid-template-columns: 33fr repeat(6, 11fr) 14fr 15fr; }
.row .load { background: #5d5d60; }
.row.big { display: flex; align-items: center; gap: 4px; }
.num { flex: 36; color: #5a5a5d; font: 600 24px/23px "Noto Sans", sans-serif; }
.b .num { flex: 34; text-align: right; }
.b .big { padding-right: 2px; }
.modes, .edits { flex: 80; display: grid; grid-template-columns: repeat(3, 1fr); gap: 4px; }
.edits { gap: 3px; }
.big .modes button, .big .edits button { height: 13px; font-size: 7px; }
.big .modes button { background: #5d5d60; }
.big .edits svg { width: 6px; height: 6px; }
.big .loop { flex: 23; height: 23px; margin: 0 5px; }
.loop svg { width: 16px; height: 17px; }
.big .main { flex: 33; height: 23px; font-size: 9px; }
.main svg { width: 10px; height: 10px; }

/* Equalisers */
.eq { display: flex; flex-direction: column; padding: 7px 4px 0; background: #333336; color: #77777a; }
.eq div { display: flex; align-items: center; justify-content: space-between; height: 24px; }
.eq .gain { height: 30px; margin-bottom: 3px; }
.knob { position: relative; display: block; flex: none; width: 20px; height: 20px; }
.knob svg { width: 100%; height: 100%; }
.gain .knob { width: 22px; height: 22px; }
.filter .knob { width: 18px; height: 18px; }
.eq button { flex: 1; height: 10px; border-radius: 0; background: #5d5d60; }

/* Effects */
.fx { display: flex; flex-direction: column; background: #000; }
.fx-top { display: grid; grid-template-columns: 1fr 1fr; gap: 1px; height: 30px; padding-bottom: 1px; }
.fx-top > * { background: #1c1c1d; }
.fx-top p { padding-top: 3px; color: #77777a; font-size: 7px; line-height: 11px; text-align: center; }
.fx-top b { display: block; color: #ddd; font-weight: 500; }
.looper { display: grid; grid-template: 1fr 1fr / 28fr 28fr; gap: 1px; padding: 4px 3px 2px; }
.looper span { display: grid; grid-template-columns: 1fr 1fr; gap: 1px; padding: 0 4px; }
.looper button { background: #131314; }
.beats { display: grid; grid-template-columns: repeat(4, 1fr); gap: 1px; padding-bottom: 1px; }
.beats button { height: 13px; border-radius: 0; background: #202022; font-size: 7px; }
.fx table { flex: 1; width: calc(100% + 2px); margin: 0 -1px; table-layout: fixed; border-collapse: separate; border-spacing: 1px 0; color: #77777a; }
.fx th, .fx td { padding: 0; border-bottom: 1px solid #000; background: #222224; line-height: 9px; text-align: center; }
.fx th { height: 13px; background: #19191a; color: #ddd; font-weight: 600; }
.fx th:first-child { width: 44px; }

/* Master section */
.master { display: grid; grid-template: 23px 69px 27px 1fr / 44px 1fr; background: #232325; color: #77777a; }
.master button { height: 10px; background: #4a4a4d; }
.air { display: flex; align-items: center; justify-content: center; gap: 1px; border-bottom: 1px solid #000; border-right: 1px solid #000; }
.master .air button { width: 17px; }
.master .air .black { width: 22px; background: #111; }
.hp { display: flex; align-items: center; justify-content: center; gap: 1px; border-bottom: 1px solid #000; }
.hp .cans { width: 9px; height: 9px; margin: 0 2px; }
.buses { grid-column: 1 / -1; display: grid; grid-template-columns: 43px 38px 1fr; }
.mic, .out { display: grid; align-items: center; align-content: start; }
.mic { grid-template: 14px repeat(3, 19px) / 18px 1fr; text-align: right; column-gap: 1px; }
.out { grid-template: 14px 19px repeat(2, 19px) / 20px 1fr; column-gap: 2px; padding-left: 5px; }
.buses .knob { width: 19px; height: 19px; }
.buses .out .knob { justify-self: end; }
h2 { grid-column: 1 / -1; font-size: 6px; line-height: 14px; text-align: center; }
.mic h2 { padding-left: 15px; }
.out h2, .out button { margin-right: 6px; }
.out button { grid-column: 1 / -1; }
.meters { display: flex; justify-content: center; gap: 4px; padding: 4px 0 5px; border: 1px solid #000; border-top: 0; }
.meters i { width: 8px; background: #000; }
.video { grid-column: 1 / -1; display: flex; align-items: center; justify-content: center; gap: 4px; padding-top: 6px; }
.video button { width: 17px; height: 11px; }
.master .video .on { background: #fff; }
.video .on svg { width: 8px; height: 8px; }
.cross { grid-column: 1 / -1; display: flex; align-items: start; gap: 6px; padding: 2px 6px 0; }
.master .cross button { width: 17px; background: #19191a; }
.cross .fader { flex: 1; height: 14px; }

/* Toolbar */
.toolbar { display: grid; grid-template-columns: minmax(0, 1fr) 226px minmax(0, 1fr); gap: 1px; height: 24px; padding-bottom: 1px; }
.toolbar > *, .kinds, .search { background: #252527; }
.toolbar button { height: 13px; font-size: 7px; }
.toolbar .lit { background: #48484b; }
.toolbar .left { display: grid; grid-template-columns: 179px minmax(0, 1fr); gap: 1px; background: #000; }
.kinds { display: grid; grid-template-columns: repeat(5, 1fr); gap: 2px; align-items: center; padding: 0 3px 0 4px; }
.search { display: flex; align-items: center; gap: 1px; padding: 0 4px 0 5px; }
.search label { display: grid; place-items: center; width: 15px; height: 13px; margin-right: -1px; background: #000; }
.search label svg { width: 11px; height: 11px; }
.search input { flex: 1; min-width: 0; height: 13px; padding: 0; border: 0; background: #000; color: #eee; font: 600 8px/13px Inter, "Liberation Sans", sans-serif; }
.search button { width: 12px; }
.toolbar .search button { font-size: 6px; }
.queue { display: flex; align-items: center; gap: 3px; padding: 0 8px; }
.queue > button { flex: 1; }
.queue div { display: grid; grid-template-columns: repeat(4, 14px); gap: 3px; padding-left: 8px; }
.singer { display: flex; align-items: center; gap: 2px; padding: 0 4px 0 5px; }
.singer .note { width: 6px; height: 10px; }
.singer .on { width: 14px; }
.singer .on svg, .mike svg { width: 11px; height: 11px; }
.mike { width: 14px; }
.singer .cycle { width: 9px; height: 9px; color: #6a6a6a; }
.toolbar .who { width: 47px; height: 11px; margin-left: 3px; background: #5d5d60; font-size: 6px; }
.singer .fader { flex: 1; height: 14px; margin: 0 2px 0 5px; }
.singer .go { width: 14px; }
.singer .lit { width: 31px; margin: 0 1px 0 5px; }
.tags { display: grid; grid-template-columns: repeat(8, 1fr); gap: 2px; width: 130px; }
.tags button::before { content: ""; width: 5px; height: 5px; border-radius: 50%; background: currentColor; }
.tags .t1 { color: #e8281e; }
.tags .t2 { color: #f07f1c; }
.tags .t3 { color: #fbee14; }
.tags .t4 { color: #35f50c; }
.tags .t5 { color: #3ce8f0; }
.tags .t6 { color: #8c0cf5; }
.tags .t7 { color: #f00c96; }
.tags .t8 { color: #fff; }

/* Browser */
.browser { flex: 1; display: flex; flex-direction: column; width: 184px; padding-left: 2px; list-style: none; }
.browser li {
  flex: 1;
  display: flex;
  align-items: center;
  gap: 5px;
  min-height: 0;
  padding-left: 9px;
  border: 1px solid transparent;
  color: #d4d4d4;
  font: 10px/19px Inter, "Liberation Sans", sans-serif;
  white-space: nowrap;
}
.browser li:nth-child(odd) { background: #1b1b1c; }
.browser .sel { border-color: #999; }
.browser .head { padding-left: 22px; }
.browser .sub { padding-left: 14px; }
.browser svg { width: 13px; height: 13px; }
.browser .party { padding-left: 8px; gap: 4px; }
.browser .party svg { width: 15px; height: 16px; }
```
